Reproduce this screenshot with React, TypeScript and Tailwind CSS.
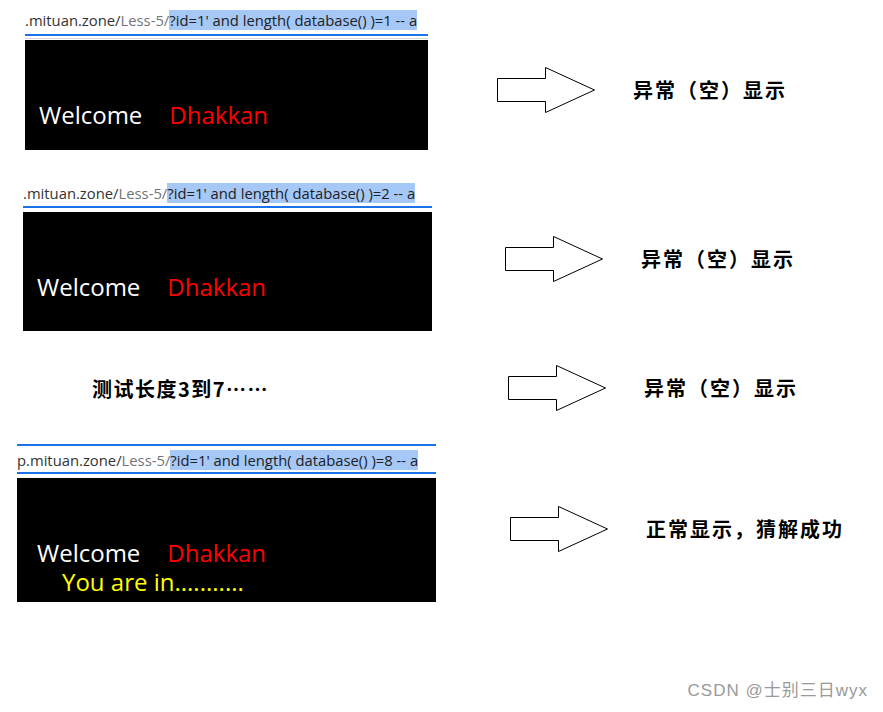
import React from 'react';

const Arrow: React.FC = () => (
  <svg width="98" height="46" viewBox="0 0 98 46" className="shrink-0">
    <polygon
      points="0.5,11.5 48.5,11.5 48.5,0.5 97.5,23 48.5,45.5 48.5,34.5 0.5,34.5"
      fill="#ffffff"
      stroke="#000000"
      strokeWidth="1"
    />
  </svg>
);

const Label: React.FC<{ text: string }> = ({ text }) => (
  <span
    className="ml-[38px] text-[20px] leading-[28px] font-bold tracking-[2px] text-black whitespace-nowrap"
    style={{ fontFamily: '"Noto Sans CJK SC", "Noto Sans", sans-serif' }}
  >
    {text}
  </span>
);

interface UrlProps {
  n: number;
  clip: boolean;
}

const UrlRow: React.FC<UrlProps> = ({ n, clip }) => (
  <div
    className="h-[20px] whitespace-nowrap text-[14.8px] leading-[20px]"
    style={{ fontFamily: '"Open Sans", "Noto Sans", sans-serif' }}
  >
    <span className="text-[#333333]">{clip ? '.mituan.zone/' : 'p.mituan.zone/'}</span>
    <span className="text-[#70757a]">Less-5/</span>
    <span className="bg-[#a6c8f6] text-[#202124]">?id=1' and length( database() )={n} -- a</span>
  </div>
);

const Screen: React.FC<{ height: string; padLeft: string; youAreIn?: boolean }> = ({ height, padLeft, youAreIn }) => (
  <div
    className={`${height} ${padLeft} bg-black pt-[59px] text-[24px] leading-[32px]`}
    style={{ fontFamily: '"Open Sans", "Noto Sans", sans-serif' }}
  >
    <div className="flex gap-[27px]">
      <span className="text-white">Welcome</span>
      <span className="text-[#ff0000]">Dhakkan</span>
    </div>
    {youAreIn && <div className="ml-[25px] mt-[-3px] text-[#ffff00]">You are in...........</div>}
  </div>
);

export default function App() {
  return (
    <div className="w-[883px] h-[712px] bg-white overflow-hidden flex flex-col">
      {/* row 1 */}
      <div className="h-[150px] flex items-start pl-[23px]">
        <div className="w-[405px] flex flex-col">
          <div className="mt-[10px] pl-[2px]">
            <UrlRow n={1} clip />
          </div>
          <div className="mt-[4px] ml-[2px] h-[2px] bg-[#1a73e8]" />
          <div className="mt-[2px] ml-[2px] h-[1px] bg-[#d6d6d6]" />
          <div className="mt-[1px] ml-[2px]">
            <Screen height="h-[110px]" padLeft="pl-[14px]" />
          </div>
        </div>
        <div className="ml-[69px] mt-[67px] flex items-center">
          <Arrow />
          <Label text="异常（空）显示" />
        </div>
      </div>

      {/* row 2 */}
      <div className="h-[181px] flex items-start pl-[23px]">
        <div className="w-[409px] flex flex-col">
          <div className="mt-[33px]">
            <UrlRow n={2} clip />
          </div>
          <div className="mt-[3px] h-[2px] bg-[#1a73e8]" />
          <div className="mt-[4px]">
            <Screen height="h-[119px]" padLeft="pl-[14px]" />
          </div>
        </div>
        <div className="ml-[73px] mt-[86px] flex items-center">
          <Arrow />
          <Label text="异常（空）显示" />
        </div>
      </div>

      {/* row 3 */}
      <div className="h-[113px] flex items-start">
        <div className="w-[508px] pl-[92px] pt-[44px]">
          <span
            className="text-[20px] leading-[28px] font-bold tracking-[1.5px] text-black whitespace-nowrap"
            style={{ fontFamily: '"Noto Sans CJK SC", "Noto Sans", sans-serif' }}
          >
            测试长度3到7……
          </span>
        </div>
        <div className="mt-[34px] flex items-center">
          <Arrow />
          <Label text="异常（空）显示" />
        </div>
      </div>

      {/* row 4 */}
      <div className="h-[158px] flex items-start pl-[17px]">
        <div className="w-[419px] flex flex-col">
          <div className="h-[2px] bg-[#1a73e8]" />
          <div className="mt-[4px]">
            <UrlRow n={8} clip={false} />
          </div>
          <div className="mt-[2px] h-[2px] bg-[#1a73e8]" />
          <div className="mt-[4px]">
            <Screen height="h-[124px]" padLeft="pl-[20px]" youAreIn />
          </div>
        </div>
        <div className="ml-[74px] mt-[62px] flex items-center">
          <Arrow />
          <Label text="正常显示，猜解成功" />
        </div>
      </div>

      {/* watermark */}
      <div className="mt-[79px] flex justify-end pr-[15px]">
        <span
          className="text-[17px] leading-[20px] tracking-[1px] text-[#9a9a9a]"
          style={{ fontFamily: '"Liberation Sans", "Noto Sans CJK SC", sans-serif' }}
        >
          CSDN @士别三日wyx
        </span>
      </div>
    </div>
  );
}
